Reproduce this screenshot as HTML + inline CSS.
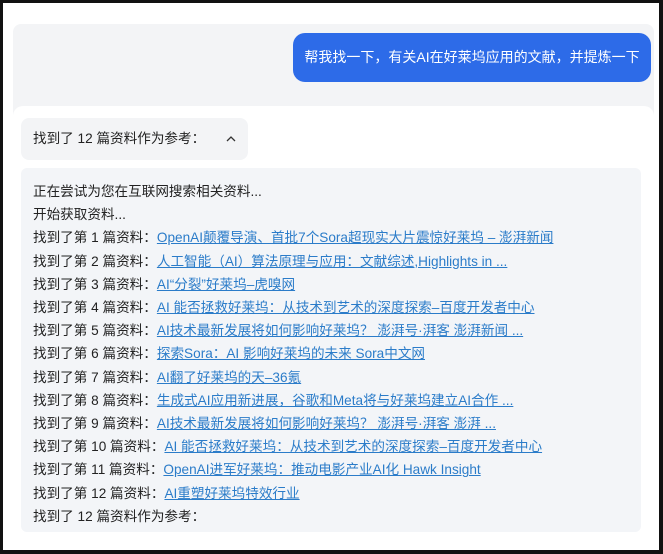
<!DOCTYPE html>
<html><head><meta charset="utf-8"><style>
*{margin:0;padding:0;box-sizing:border-box}
html,body{width:663px;height:554px;overflow:hidden;background:#fff}
body{font-family:"Liberation Sans","Noto Sans CJK SC",sans-serif;position:relative}
.frame{position:absolute;left:0;top:0;width:663px;height:554px;border:3px solid #111;border-right-width:4px;border-bottom-width:4px}
.gray{position:absolute;left:13px;top:24px;width:641px;height:100px;background:#f3f4f6;border-radius:8px}
.card{position:absolute;left:13px;top:106px;width:641px;height:440px;background:#fff;border-radius:10px}
.bubble{position:absolute;left:293px;top:33px;width:358px;height:49px;background:#2d6be8;border-radius:12px;color:#fff;font-size:14px;line-height:49px;text-align:center;white-space:nowrap}
.chip{position:absolute;left:21px;top:118px;width:227px;height:42px;background:#f3f4f6;border-radius:8px;font-size:13.6px;color:#222;line-height:42px;padding-left:12px}
.chip svg{position:absolute;left:205px;top:18px}
.box{position:absolute;left:21px;top:168px;width:620px;height:364px;background:#f3f5f8;border-radius:6px;padding:12px 0 0 12px;font-size:13.6px;color:#222;line-height:23.2px;white-space:nowrap}
.box a{color:#2b7cc9;text-decoration:underline}
</style></head><body>
<div class="gray"></div>
<div class="card"></div>
<div class="bubble">帮我找一下，有关AI在好莱坞应用的文献，并提炼一下</div>
<div class="chip">找到了 12 篇资料作为参考：<svg width="10" height="6" viewBox="0 0 10 6"><path d="M1 5L5 1L9 5" fill="none" stroke="#333" stroke-width="1.3"/></svg></div>
<div class="box">
正在尝试为您在互联网搜索相关资料...<br>
开始获取资料...<br>
找到了第 1 篇资料：<a>OpenAI颠覆导演、首批7个Sora超现实大片震惊好莱坞 – 澎湃新闻</a><br>
找到了第 2 篇资料：<a>人工智能（AI）算法原理与应用：文献综述,Highlights in ...</a><br>
找到了第 3 篇资料：<a>AI“分裂”好莱坞–虎嗅网</a><br>
找到了第 4 篇资料：<a>AI 能否拯救好莱坞：从技术到艺术的深度探索–百度开发者中心</a><br>
找到了第 5 篇资料：<a>AI技术最新发展将如何影响好莱坞？ 澎湃号·湃客 澎湃新闻 ...</a><br>
找到了第 6 篇资料：<a>探索Sora：AI 影响好莱坞的未来 Sora中文网</a><br>
找到了第 7 篇资料：<a>AI翻了好莱坞的天–36氪</a><br>
找到了第 8 篇资料：<a>生成式AI应用新进展，谷歌和Meta将与好莱坞建立AI合作 ...</a><br>
找到了第 9 篇资料：<a>AI技术最新发展将如何影响好莱坞？ 澎湃号·湃客 澎湃 ...</a><br>
找到了第 10 篇资料：<a>AI 能否拯救好莱坞：从技术到艺术的深度探索–百度开发者中心</a><br>
找到了第 11 篇资料：<a>OpenAI进军好莱坞：推动电影产业AI化 Hawk Insight</a><br>
找到了第 12 篇资料：<a>AI重塑好莱坞特效行业</a><br>
找到了 12 篇资料作为参考：
</div>
<div class="frame"></div>
</body></html>
